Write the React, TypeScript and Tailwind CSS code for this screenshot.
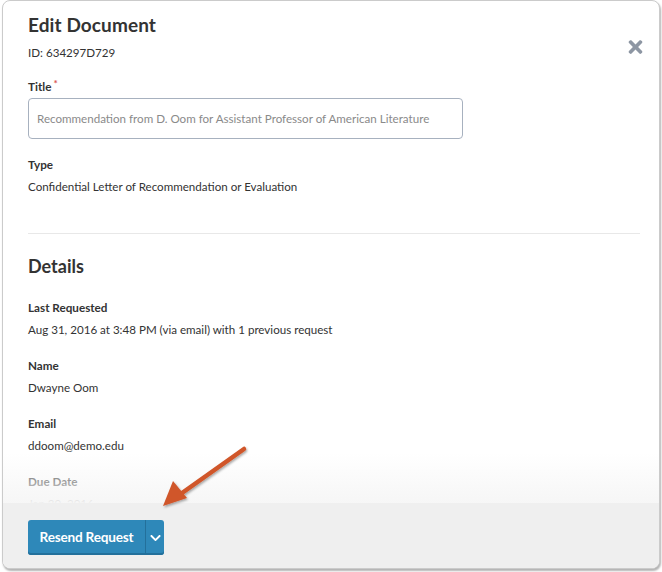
import React from "react";
import { FaTimes, FaChevronDown } from "react-icons/fa";

const font = { fontFamily: "Lato, 'Open Sans', sans-serif" };

function Field({ label, value, first }: { label: string; value: string; first?: boolean }) {
  return (
    <div className={first ? "mt-[17px]" : "mt-[15px]"}>
      <div className="text-[11.7px] leading-[20px] font-bold text-[#333]">{label}</div>
      <div className="mt-[3px] text-[11.6px] leading-[20px] text-[#333]">{value}</div>
    </div>
  );
}

export default function App() {
  return (
    <div className="w-[662px] h-[572px] bg-white pl-[2px] relative" style={font}>
      <div className="w-[658px] h-[569px] border border-[#cbcbcb] rounded-[8px] shadow-[1px_2px_2px_rgba(0,0,0,0.3)] flex flex-col overflow-hidden bg-white relative">
        <div className="flex-1 relative overflow-hidden px-[25px] pt-[10px]">
          <div className="text-[19px] leading-[28px] font-bold text-[#333] tracking-[0.1px]">Edit Document</div>
          <div className="mt-[4px] text-[11.6px] leading-[20px] text-[#333]">ID: 634297D729</div>
          <div className="mt-[13px] text-[11.7px] leading-[20px] font-bold text-[#333] flex items-start">
            Title<span className="text-[#d9534f] text-[10px] leading-[14px] ml-[2px]">*</span>
          </div>
          <div className="mt-[2px] w-[435px] h-[41px] border border-[#a7b1bf] rounded-[4px] flex items-center px-[8px] text-[11.6px] text-[#8a8a8a]">
            Recommendation from D. Oom for Assistant Professor of American Literature
          </div>
          <div className="mt-[15px] text-[11.7px] leading-[20px] font-bold text-[#333]">Type</div>
          <div className="mt-[3px] text-[11.6px] leading-[20px] text-[#333]">Confidential Letter of Recommendation or Evaluation</div>
          <div className="mt-[36px] h-px bg-[#e8e8e8] w-[612px]" />
          <div className="mt-[18px] text-[18px] leading-[28px] font-bold text-[#333]">Details</div>
          <Field first label="Last Requested" value="Aug 31, 2016 at 3:48 PM (via email) with 1 previous request" />
          <Field label="Name" value="Dwayne Oom" />
          <Field label="Email" value="ddoom@demo.edu" />
          <Field label="Due Date" value="Jan 30, 2016" />
          <div className="absolute left-0 right-0 bottom-0 h-[50px] bg-gradient-to-b from-[rgba(255,255,255,0)] to-[rgba(246,246,246,0.97)]" />
        </div>
        <div className="h-[65px] bg-[#efefef] pl-[25px] pt-[17px]">
          <div className="flex h-[35px] w-[136px] rounded-[3px] bg-[#2e88b9] shadow-[inset_0_-2px_0_#23709b] text-white">
            <div className="w-[117px] flex items-center justify-center text-[13.6px] font-bold tracking-[-0.2px]">Resend Request</div>
            <div className="w-px bg-[#23709b]" />
            <div className="flex-1 flex items-center justify-center">
              <FaChevronDown className="w-[11px] h-[12px]" />
            </div>
          </div>
        </div>
        <FaTimes className="absolute right-[16px] top-[36px] w-[15px] h-[20px] text-[#8d96a3]" />
      </div>
      <svg className="absolute left-0 top-0 pointer-events-none" width="662" height="572">
        <defs>
          <filter id="sh" x="-20%" y="-20%" width="140%" height="140%">
            <feDropShadow dx="1" dy="1.5" stdDeviation="1.2" floodColor="#000" floodOpacity="0.35" />
          </filter>
        </defs>
        <g filter="url(#sh)">
          <line x1="244" y1="449" x2="182" y2="493" stroke="#d0562a" strokeWidth="4.5" strokeLinecap="round" />
          <polygon points="163,506 173,481 187,498" fill="#d0562a" />
        </g>
      </svg>
    </div>
  );
}
